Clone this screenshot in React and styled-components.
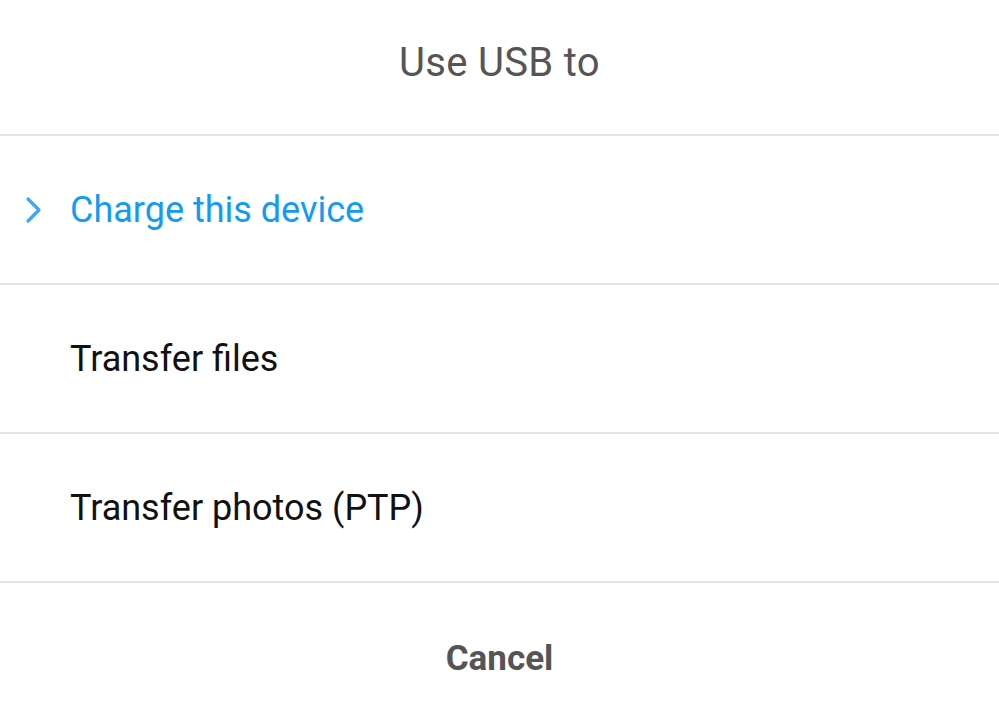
import React from 'react'
import styled, { createGlobalStyle } from 'styled-components'

const GlobalStyle = createGlobalStyle`
  html, body {
    margin: 0;
    padding: 0;
    background: #fff;
    font-family: Roboto, "Noto Sans", sans-serif;
  }
`

const Sheet = styled.div`
  width: 999px;
  height: 723px;
  display: flex;
  flex-direction: column;
  background: #fff;
`

const Title = styled.div`
  height: 134px;
  display: flex;
  align-items: center;
  justify-content: center;
  padding-bottom: 10px;
  box-sizing: border-box;
  font-size: 40px;
  color: #555;
  letter-spacing: 0.3px;
`

const Option = styled.div`
  height: 149px;
  box-sizing: border-box;
  border-top: 2px solid #e4e4e4;
  display: flex;
  align-items: center;
  padding-left: 70px;
  position: relative;
  font-size: 36px;
  color: ${(p) => (p.$active ? '#129bf4' : '#111')};
`

const Chevron = styled.svg`
  position: absolute;
  left: 24px;
  top: 50%;
  margin-top: -14px;
  width: 20px;
  height: 28px;
`

const Footer = styled.div`
  flex: 1;
  border-top: 2px solid #e4e4e4;
  display: flex;
  align-items: center;
  justify-content: center;
  padding-top: 10px;
  font-size: 35px;
  font-weight: 700;
  color: #555;
`

const options = [
  { label: 'Charge this device', active: true },
  { label: 'Transfer files' },
  { label: 'Transfer photos (PTP)' },
]

export default function App() {
  return (
    <>
      <GlobalStyle />
      <Sheet>
        <Title>Use USB to</Title>
        {options.map((o) => (
          <Option key={o.label} $active={o.active}>
            {o.active && (
              <Chevron viewBox='0 0 20 28'>
                <path
                  d='M4 3 L15 14 L4 25'
                  fill='none'
                  stroke='#3aa8f5'
                  strokeWidth='3.2'
                  strokeLinecap='round'
                  strokeLinejoin='round'
                />
              </Chevron>
            )}
            {o.label}
          </Option>
        ))}
        <Footer>Cancel</Footer>
      </Sheet>
    </>
  )
}
